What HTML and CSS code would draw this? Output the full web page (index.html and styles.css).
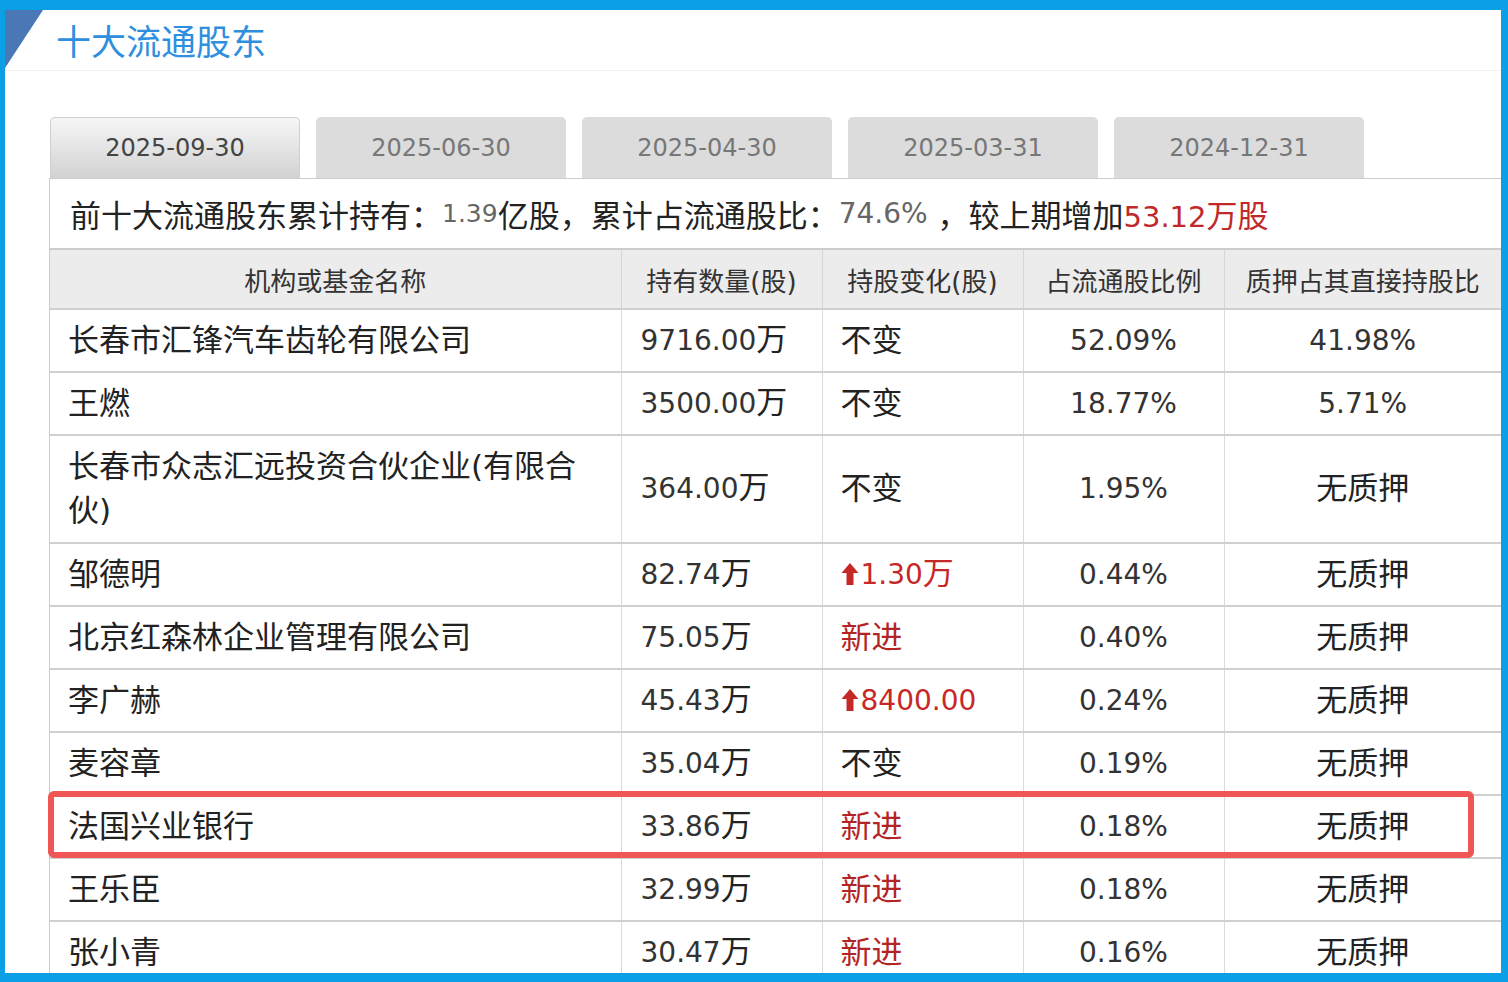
FILE: index.html
```html
<!DOCTYPE html>
<html lang="zh-CN">
<head>
<meta charset="utf-8">
<title>十大流通股东</title>
<link rel="stylesheet" href="styles.css">
</head>
<body>
<div class="frame">
  <div class="title-bar">
    <span class="corner"></span>
    <h2 class="title">十大流通股东</h2>
  </div>
  <div class="tabs">
    <div class="tab active">2025-09-30</div>
    <div class="tab">2025-06-30</div>
    <div class="tab">2025-04-30</div>
    <div class="tab">2025-03-31</div>
    <div class="tab">2024-12-31</div>
  </div>
  <div class="panel">
    <div class="summary">前十大流通股东累计持有：<span class="sn">1.39</span>亿股，累计占流通股比：<span class="sn wide">74.6%</span> ，较上期增加<span class="red"><span class="rn">53.12</span>万股</span></div>
    <table class="holders">
      <colgroup>
        <col class="c1"><col class="c2"><col class="c3"><col class="c4"><col class="c5">
      </colgroup>
      <thead>
        <tr>
          <th>机构或基金名称</th>
          <th>持有数量(股)</th>
          <th>持股变化(股)</th>
          <th>占流通股比例</th>
          <th>质押占其直接持股比</th>
        </tr>
      </thead>
      <tbody>
        <tr>
          <td>长春市汇锋汽车齿轮有限公司</td>
          <td><span class="n">9716.00</span>万</td>
          <td>不变</td>
          <td class="ctr"><span class="n">52.09%</span></td>
          <td class="ctr"><span class="n">41.98%</span></td>
        </tr>
        <tr>
          <td>王燃</td>
          <td><span class="n">3500.00</span>万</td>
          <td>不变</td>
          <td class="ctr"><span class="n">18.77%</span></td>
          <td class="ctr"><span class="n">5.71%</span></td>
        </tr>
        <tr class="tall">
          <td>长春市众志汇远投资合伙企业(有限合伙)</td>
          <td><span class="n">364.00</span>万</td>
          <td>不变</td>
          <td class="ctr"><span class="n">1.95%</span></td>
          <td class="ctr">无质押</td>
        </tr>
        <tr>
          <td>邹德明</td>
          <td><span class="n">82.74</span>万</td>
          <td class="up"><svg class="arrow" viewBox="0 0 18 24" width="18" height="24"><path d="M9 1 L17.5 11 L12.5 11 L12.5 23 L5.5 23 L5.5 11 L0.5 11 Z"/></svg><span class="n">1.30</span>万</td>
          <td class="ctr"><span class="n">0.44%</span></td>
          <td class="ctr">无质押</td>
        </tr>
        <tr>
          <td>北京红森林企业管理有限公司</td>
          <td><span class="n">75.05</span>万</td>
          <td class="new">新进</td>
          <td class="ctr"><span class="n">0.40%</span></td>
          <td class="ctr">无质押</td>
        </tr>
        <tr>
          <td>李广赫</td>
          <td><span class="n">45.43</span>万</td>
          <td class="up"><svg class="arrow" viewBox="0 0 18 24" width="18" height="24"><path d="M9 1 L17.5 11 L12.5 11 L12.5 23 L5.5 23 L5.5 11 L0.5 11 Z"/></svg><span class="n">8400.00</span></td>
          <td class="ctr"><span class="n">0.24%</span></td>
          <td class="ctr">无质押</td>
        </tr>
        <tr>
          <td>麦容章</td>
          <td><span class="n">35.04</span>万</td>
          <td>不变</td>
          <td class="ctr"><span class="n">0.19%</span></td>
          <td class="ctr">无质押</td>
        </tr>
        <tr>
          <td>法国兴业银行</td>
          <td><span class="n">33.86</span>万</td>
          <td class="new">新进</td>
          <td class="ctr"><span class="n">0.18%</span></td>
          <td class="ctr">无质押</td>
        </tr>
        <tr>
          <td>王乐臣</td>
          <td><span class="n">32.99</span>万</td>
          <td class="new">新进</td>
          <td class="ctr"><span class="n">0.18%</span></td>
          <td class="ctr">无质押</td>
        </tr>
        <tr>
          <td>张小青</td>
          <td><span class="n">30.47</span>万</td>
          <td class="new">新进</td>
          <td class="ctr"><span class="n">0.16%</span></td>
          <td class="ctr">无质押</td>
        </tr>
      </tbody>
    </table>
    <div class="highlight"></div>
  </div>
</div>
</body>
</html>
```

FILE: styles.css
```css
html, body {
  margin: 0;
  padding: 0;
  background: #ffffff;
}

.frame {
  box-sizing: border-box;
  width: 1508px;
  height: 982px;
  border-style: solid;
  border-color: #0ba0e6;
  border-width: 10px 7px 9px 5px;
  background: #ffffff;
  overflow: hidden;
  font-family: "DejaVu Sans", "Noto Sans CJK SC", sans-serif;
  color: #222;
}

.title-bar {
  height: 60px;
  border-bottom: 1px solid #f1f1f1;
  display: flex;
  align-items: center;
}

.corner {
  align-self: flex-start;
  width: 0;
  height: 0;
  border-top: 58px solid #4a78b6;
  border-right: 38px solid transparent;
}

.title {
  margin: 0 0 0 13px;
  font-family: "Noto Sans CJK SC", sans-serif;
  font-weight: normal;
  font-size: 35px;
  line-height: 40px;
  color: #2f8fdf;
}

.tabs {
  margin-top: 46px;
  padding-left: 45px;
  display: flex;
  gap: 16px;
}

.tab {
  box-sizing: border-box;
  width: 250px;
  height: 61px;
  display: flex;
  align-items: center;
  justify-content: center;
  font-size: 24px;
  color: #777;
  background: #dcdcdc;
  border-radius: 5px 5px 0 0;
}

.tab.active {
  color: #444;
  background: linear-gradient(#f6f6f6, #d2d2d2);
  border: 1px solid #cfcfcf;
  border-bottom: none;
}

.panel {
  position: relative;
  margin-left: 44px;
  border-left: 1px solid #cccccc;
  border-top: 1px solid #cccccc;
}

.summary {
  height: 69px;
  padding-left: 20px;
  display: flex;
  align-items: center;
  font-size: 31px;
  color: #222;
  white-space: pre;
}

.sn {
  font-size: 25px;
  color: #666;
}

.sn.wide {
  font-size: 28px;
}

.red {
  color: #c0282b;
}

.rn {
  font-size: 29px;
}

.holders {
  width: 1451px;
  table-layout: fixed;
  border-collapse: collapse;
}

.c1 { width: 571px; }
.c2 { width: 201px; }
.c3 { width: 201px; }
.c4 { width: 201px; }
.c5 { width: 277px; }

.holders th {
  height: 58px;
  padding: 0;
  background: #ececec;
  font-weight: normal;
  font-size: 26px;
  color: #333;
  text-align: center;
  border-top: 2px solid #cccccc;
  border-bottom: 2px solid #d0d0d0;
  border-left: 1px solid #d6d6d6;
}

.holders th:first-child,
.holders td:first-child {
  border-left: none;
}

.holders td {
  padding: 7px 24px 8px 18px;
  line-height: 44px;
  font-size: 31px;
  color: #222;
  vertical-align: middle;
  border-bottom: 2px solid #d0d0d0;
  border-left: 1px solid #dadada;
}

.holders tr.tall td {
  padding-top: 8px;
  padding-bottom: 10px;
}

.holders td:nth-child(2) {
  padding-left: 19px;
  padding-right: 8px;
}

.holders td:nth-child(3) {
  padding-left: 18px;
  padding-right: 8px;
}

.holders td.ctr {
  text-align: center;
  padding-left: 8px;
  padding-right: 8px;
}

.n {
  font-size: 28px;
  color: #333;
}

.holders td.new {
  color: #b32424;
}

.holders td.up {
  color: #c62828;
}

.holders td.up .n {
  color: #c62828;
}

.arrow {
  fill: #c62828;
  vertical-align: -2px;
  margin-right: 2px;
}

.highlight {
  position: absolute;
  left: -2px;
  top: 612px;
  box-sizing: border-box;
  width: 1426px;
  height: 67px;
  border: 6px solid #f05656;
  border-radius: 6px;
  pointer-events: none;
}
```
